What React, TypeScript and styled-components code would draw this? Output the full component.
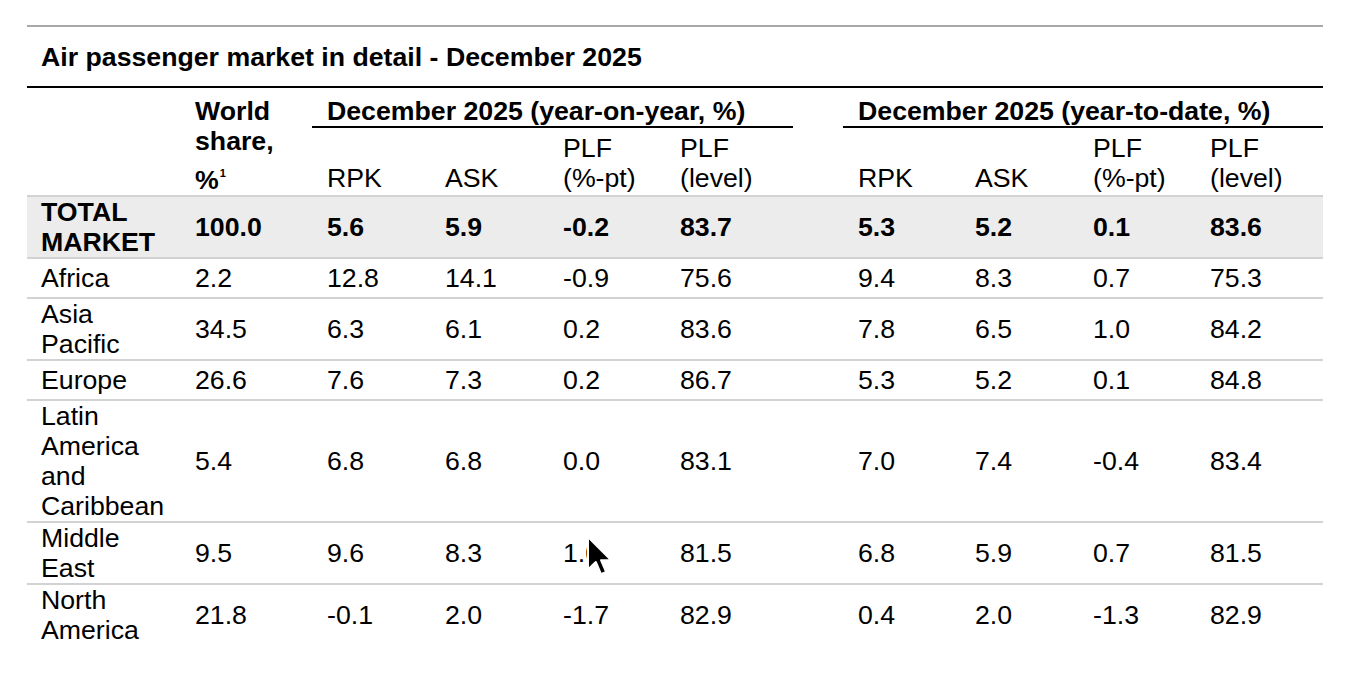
import React from 'react';
import styled, { createGlobalStyle } from 'styled-components';

type MarketRow = {
  region: string;
  share: string;
  yoy: string[];
  ytd: string[];
  total?: boolean;
};

const rows: MarketRow[] = [
  { region: 'TOTAL MARKET', share: '100.0', yoy: ['5.6', '5.9', '-0.2', '83.7'], ytd: ['5.3', '5.2', '0.1', '83.6'], total: true },
  { region: 'Africa', share: '2.2', yoy: ['12.8', '14.1', '-0.9', '75.6'], ytd: ['9.4', '8.3', '0.7', '75.3'] },
  { region: 'Asia Pacific', share: '34.5', yoy: ['6.3', '6.1', '0.2', '83.6'], ytd: ['7.8', '6.5', '1.0', '84.2'] },
  { region: 'Europe', share: '26.6', yoy: ['7.6', '7.3', '0.2', '86.7'], ytd: ['5.3', '5.2', '0.1', '84.8'] },
  { region: 'Latin America and Caribbean', share: '5.4', yoy: ['6.8', '6.8', '0.0', '83.1'], ytd: ['7.0', '7.4', '-0.4', '83.4'] },
  { region: 'Middle East', share: '9.5', yoy: ['9.6', '8.3', '1.0', '81.5'], ytd: ['6.8', '5.9', '0.7', '81.5'] },
  { region: 'North America', share: '21.8', yoy: ['-0.1', '2.0', '-1.7', '82.9'], ytd: ['0.4', '2.0', '-1.3', '82.9'] },
];

const colWidths = [153, 132, 118, 118, 117, 128, 50, 117, 118, 117, 128];

const GlobalStyle = createGlobalStyle`
  html, body {
    margin: 0;
    padding: 0;
    background: #fff;
  }
  body {
    font-family: "Liberation Sans", Arial, Helvetica, sans-serif;
    color: #000;
  }
`;

const Page = styled.div`
  position: relative;
  box-sizing: border-box;
  width: 1352px;
  height: 676px;
  padding: 25px 0 0 27px;
  overflow: hidden;
`;

const Panel = styled.section`
  width: 1296px;
  border-top: 2px solid #a9a9a9;
`;

const Title = styled.h2`
  margin: 0;
  padding: 15px 0 14px 14px;
  font-size: 26.7px;
  line-height: 30px;
  font-weight: bold;
  border-bottom: 2px solid #000;
`;

const Table = styled.table`
  width: 1296px;
  table-layout: fixed;
  border-collapse: separate;
  border-spacing: 0;
  font-size: 26.7px;
  line-height: 30px;
`;

const Col = styled.col<{ $w: number }>`
  width: ${(p) => p.$w}px;
`;

const BlankHead = styled.th`
  padding: 0;
`;

const ShareHead = styled.th`
  padding: 8px 0 0 15px;
  text-align: left;
  vertical-align: top;
  font-weight: bold;
`;

const PctLine = styled.span`
  display: block;
  margin-top: 9px;
`;

const Sup = styled.sup`
  font-size: 11px;
  line-height: 0;
  vertical-align: 12px;
  margin-left: 1px;
`;

const GroupHead = styled.th`
  padding: 8px 0 0 15px;
  text-align: left;
  font-weight: bold;
  white-space: nowrap;
  border-bottom: 2px solid #000;
`;

const SubHead = styled.th`
  padding: 5px 0 2px 15px;
  text-align: left;
  vertical-align: bottom;
  font-weight: normal;
`;

const Row = styled.tr<{ $total?: boolean }>`
  background: ${(p) => (p.$total ? '#ececec' : 'transparent')};
  font-weight: ${(p) => (p.$total ? 'bold' : 'normal')};
`;

const Cell = styled.td`
  height: 38px;
  padding: 0 0 0 15px;
  vertical-align: middle;
  border-top: 2px solid #d2d2d2;
`;

const RegionCell = styled(Cell)`
  padding: 0 12px 0 14px;
`;

const Pointer = styled.svg`
  position: absolute;
  left: 586px;
  top: 535px;
  width: 28px;
  height: 42px;
  pointer-events: none;
`;

const Cursor = () => (
  <Pointer viewBox="-1 -1 14 21">
    <path
      d="M0 0 L0 16.2 L3.9 12.5 L6.5 18.6 L9.1 17.5 L6.5 11.6 L11.6 11.6 Z"
      fill="#000"
      stroke="#fff"
      strokeWidth="1"
      strokeLinejoin="round"
    />
  </Pointer>
);

export default function App() {
  return (
    <Page>
      <GlobalStyle />
      <Panel>
        <Title>Air passenger market in detail - December 2025</Title>
        <Table>
          <colgroup>
            {colWidths.map((w, i) => (
              <Col key={i} $w={w} />
            ))}
          </colgroup>
          <thead>
            <tr>
              <BlankHead rowSpan={2} />
              <ShareHead rowSpan={2}>
                World
                <br />
                share,
                <PctLine>
                  %<Sup>1</Sup>
                </PctLine>
              </ShareHead>
              <GroupHead colSpan={4}>December 2025 (year-on-year, %)</GroupHead>
              <BlankHead rowSpan={2} />
              <GroupHead colSpan={4}>December 2025 (year-to-date, %)</GroupHead>
            </tr>
            <tr>
              <SubHead>RPK</SubHead>
              <SubHead>ASK</SubHead>
              <SubHead>
                PLF
                <br />
                (%-pt)
              </SubHead>
              <SubHead>
                PLF
                <br />
                (level)
              </SubHead>
              <SubHead>RPK</SubHead>
              <SubHead>ASK</SubHead>
              <SubHead>
                PLF
                <br />
                (%-pt)
              </SubHead>
              <SubHead>
                PLF
                <br />
                (level)
              </SubHead>
            </tr>
          </thead>
          <tbody>
            {rows.map((r) => (
              <Row key={r.region} $total={r.total}>
                <RegionCell>{r.region}</RegionCell>
                <Cell>{r.share}</Cell>
                {r.yoy.map((v, i) => (
                  <Cell key={'y' + i}>{v}</Cell>
                ))}
                <Cell />
                {r.ytd.map((v, i) => (
                  <Cell key={'d' + i}>{v}</Cell>
                ))}
              </Row>
            ))}
          </tbody>
        </Table>
      </Panel>
      <Cursor />
    </Page>
  );
}
